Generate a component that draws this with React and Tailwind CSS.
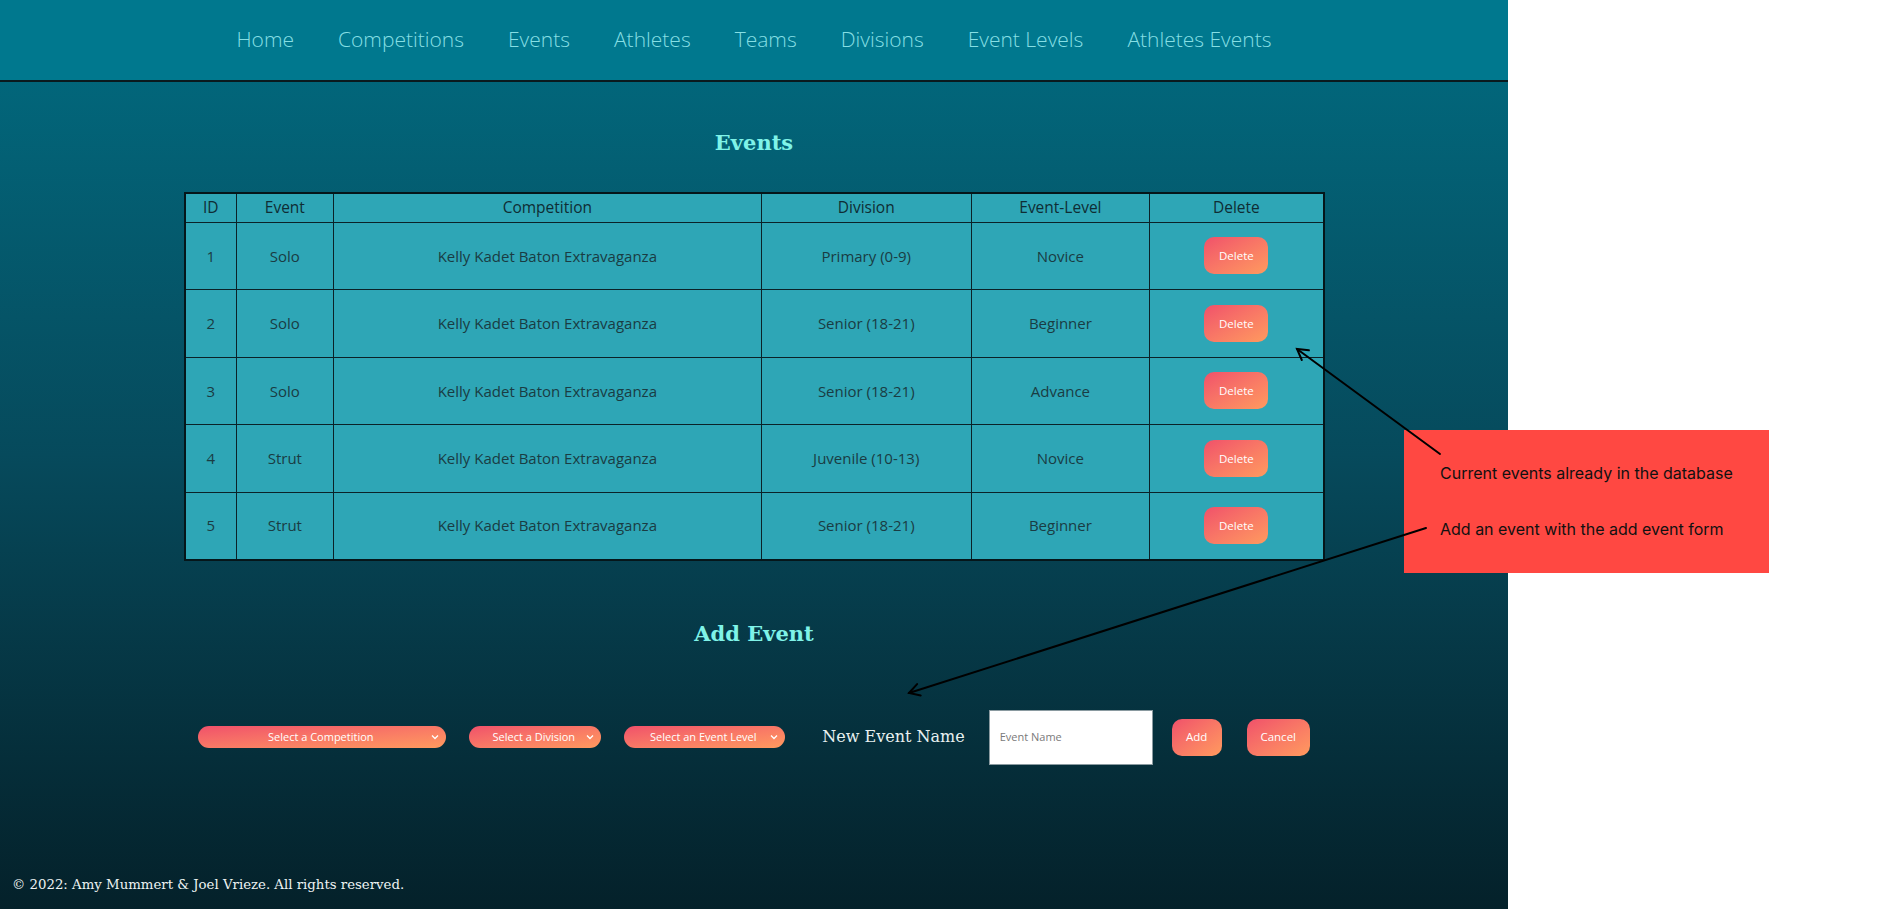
import React from "react";

const navItems = ["Home", "Competitions", "Events", "Athletes", "Teams", "Divisions", "Event Levels", "Athletes Events"];

const rows = [
  ["1", "Solo", "Kelly Kadet Baton Extravaganza", "Primary (0-9)", "Novice"],
  ["2", "Solo", "Kelly Kadet Baton Extravaganza", "Senior (18-21)", "Beginner"],
  ["3", "Solo", "Kelly Kadet Baton Extravaganza", "Senior (18-21)", "Advance"],
  ["4", "Strut", "Kelly Kadet Baton Extravaganza", "Juvenile (10-13)", "Novice"],
  ["5", "Strut", "Kelly Kadet Baton Extravaganza", "Senior (18-21)", "Beginner"],
];

const slab = { fontFamily: '"DejaVu Serif", "Liberation Serif", serif' };
const sans = { fontFamily: '"Open Sans", "Liberation Sans", sans-serif' };

function Chevron() {
  return (
    <svg width="8" height="6" viewBox="0 0 8 6" className="shrink-0">
      <path d="M1 1.5 L4 4.5 L7 1.5" fill="none" stroke="#fff" strokeWidth="1.3" />
    </svg>
  );
}

function SelectPill({ label, w }) {
  return (
    <div
      className={`${w} h-[22px] rounded-full bg-linear-to-br from-[#f0506a] to-[#ff9a5e] flex items-center pl-3 pr-[7px] text-[11px] text-white`}
      style={sans}
    >
      <span className="flex-1 text-center">{label}</span>
      <Chevron />
    </div>
  );
}

function GradBtn({ children, w }) {
  return (
    <div
      className={`${w} h-[37px] rounded-[10px] bg-linear-to-br from-[#f0506a] to-[#ff9a5e] flex items-center justify-center text-[11.5px] text-white`}
      style={sans}
    >
      {children}
    </div>
  );
}

export default function App() {
  return (
    <div className="relative w-[1900px] h-[909px] overflow-hidden bg-white flex">
      <div className="w-[1508px] h-[909px] flex flex-col bg-linear-to-b from-[#006c81] via-[#064a5c] to-[#04212a]">
        <nav className="h-[82px] shrink-0 bg-[#00788e] border-b-2 border-[#0a1a1e] flex items-center justify-center" style={sans}>
          <ul className="flex items-center gap-[44px] text-[21px] font-light text-[#86dfe4]">
            {navItems.map((n) => (
              <li key={n}>{n}</li>
            ))}
          </ul>
        </nav>

        <h2 className="mt-[46px] h-[30px] leading-[30px] text-center text-[21px] font-bold text-[#7ff3e8]" style={slab}>
          Events
        </h2>

        <div className="mt-[34px] flex justify-center">
          <table className="w-[1141px] border-collapse border-2 border-[#05161a] bg-[#2ea6b6] text-[#1a3c43]" style={sans}>
            <thead>
              <tr className="h-[29px] text-[15.5px] text-[#0f2d34]">
                <th className="w-[52px] border border-[#0b2228] font-medium">ID</th>
                <th className="w-[97px] border border-[#0b2228] font-medium">Event</th>
                <th className="w-[429px] border border-[#0b2228] font-medium">Competition</th>
                <th className="w-[210px] border border-[#0b2228] font-medium">Division</th>
                <th className="w-[179px] border border-[#0b2228] font-medium">Event-Level</th>
                <th className="w-[174px] border border-[#0b2228] font-medium">Delete</th>
              </tr>
            </thead>
            <tbody>
              {rows.map((r) => (
                <tr key={r[0]} className="h-[67.5px] text-[15px] text-center">
                  {r.map((c, i) => (
                    <td key={i} className="border border-[#0b2228]">
                      {c}
                    </td>
                  ))}
                  <td className="border border-[#0b2228]">
                    <div className="flex justify-center">
                      <GradBtn w="w-[64px]">Delete</GradBtn>
                    </div>
                  </td>
                </tr>
              ))}
            </tbody>
          </table>
        </div>

        <h2 className="mt-[58px] h-[30px] leading-[30px] text-center text-[21px] font-bold text-[#7ff3e8]" style={slab}>
          Add Event
        </h2>

        <div className="mt-[61px] flex items-center justify-center">
          <SelectPill label="Select a Competition" w="w-[248px]" />
          <div className="ml-[23px]">
            <SelectPill label="Select a Division" w="w-[132px]" />
          </div>
          <div className="ml-[23px]">
            <SelectPill label="Select an Event Level" w="w-[161px]" />
          </div>
          <span className="ml-[37px] text-[16px] text-[#e8f0f0]" style={slab}>
            New Event Name
          </span>
          <div
            className="ml-[24px] w-[164px] h-[55px] bg-white border border-[#8a9aa0] flex items-center px-[10px] text-[11px] text-[#7a7a7a]"
            style={sans}
          >
            Event Name
          </div>
          <div className="ml-[19px]">
            <GradBtn w="w-[50px]">Add</GradBtn>
          </div>
          <div className="ml-[25px]">
            <GradBtn w="w-[63px]">Cancel</GradBtn>
          </div>
        </div>

        <footer className="mt-auto pb-[14px] pl-[12px] text-[13.3px] text-[#eef3f3]" style={slab}>
          © 2022: Amy Mummert &amp; Joel Vrieze. All rights reserved.
        </footer>
      </div>

      <div
        className="absolute left-[1404px] top-[430px] w-[365px] h-[143px] bg-[#ff4842] text-[16px] text-[#111] flex flex-col pl-[36px] pt-[33px] gap-[36px]"
        style={{ fontFamily: 'Inter, "Liberation Sans", sans-serif' }}
      >
        <span className="leading-[20px]">Current events already in the database</span>
        <span className="leading-[20px]">Add an event with the add event form</span>
      </div>

      <svg className="absolute inset-0 pointer-events-none" width="1900" height="909">
        <g stroke="#000" strokeWidth="2" fill="none" strokeLinecap="round">
          <line x1="1440" y1="454" x2="1297" y2="349" />
          <polyline points="1301.8,360 1297,349 1308.9,350.3" />
          <line x1="1426" y1="528" x2="909" y2="693" />
          <polyline points="920.7,695.6 909,693 917.1,684.1" />
        </g>
      </svg>
    </div>
  );
}
